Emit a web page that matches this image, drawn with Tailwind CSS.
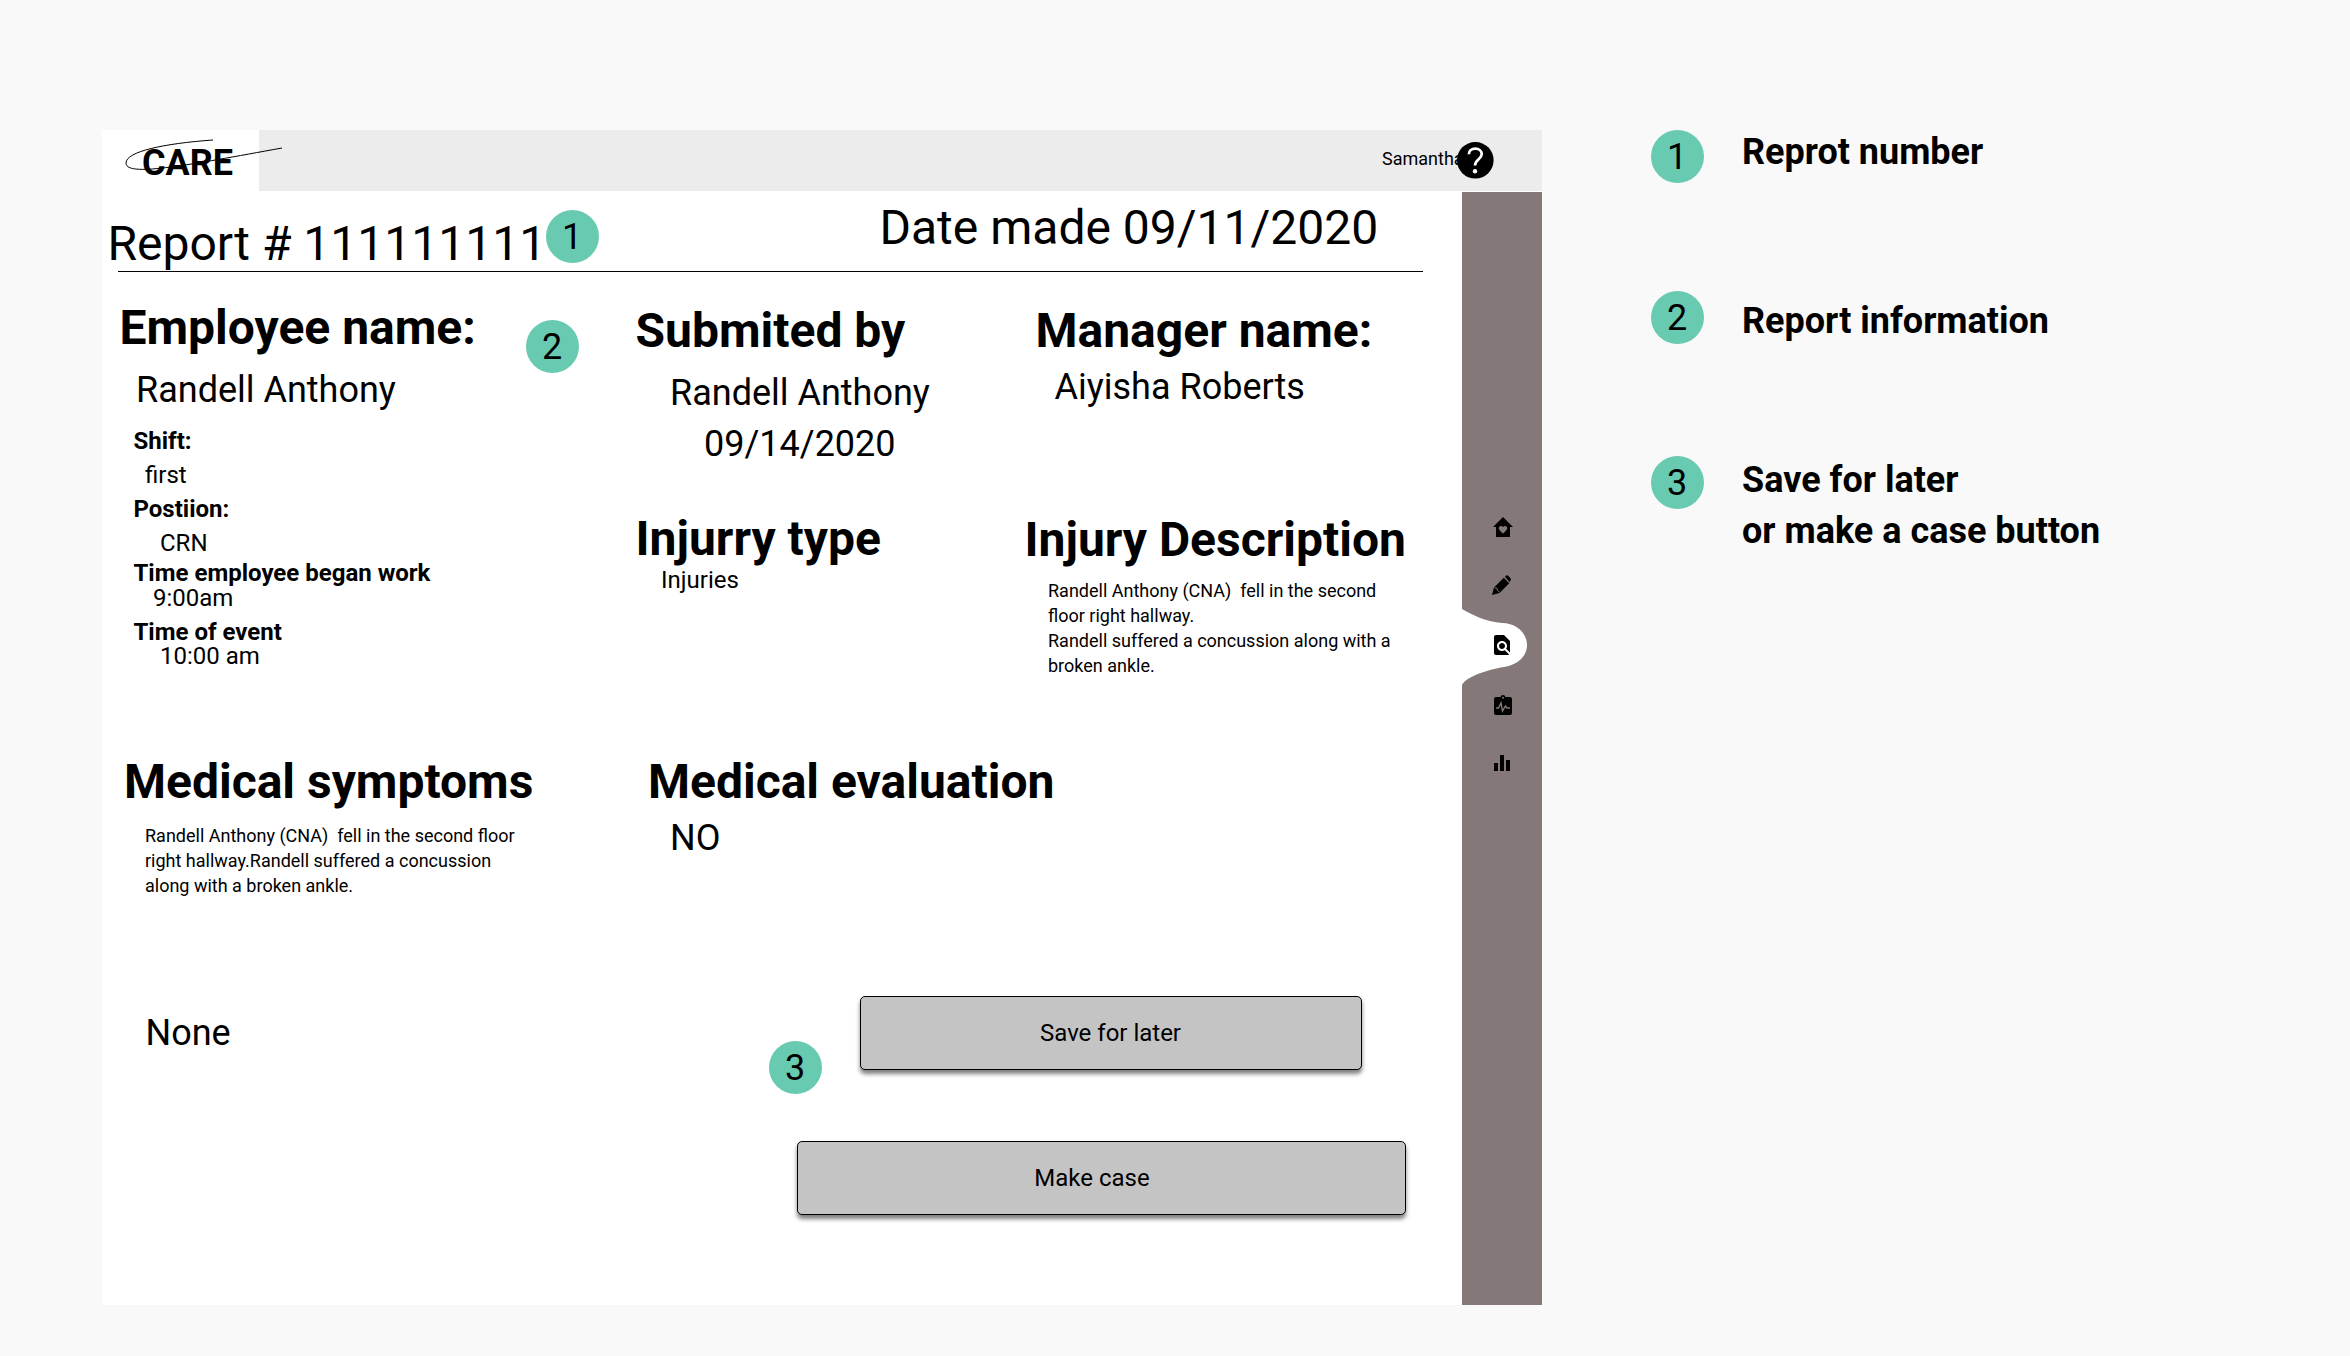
<!DOCTYPE html>
<html lang="en">
<head>
<meta charset="utf-8">
<title>Report details</title>
<script src="https://cdn.jsdelivr.net/npm/@tailwindcss/browser@4"></script>
</head>
<body class="bg-[#f9f9f9] font-[Roboto,sans-serif] text-black w-[2350px] h-[1356px] overflow-hidden">
<div class="flex items-start pt-[130px] pl-[102px]">
  <main class="relative w-[1440px] h-[1175px] bg-white shrink-0">
    <header class="flex h-[61px]">
      <div class="relative w-[157px] h-full">
        <p class="pl-10 pt-3 text-[36px] leading-[42px] font-bold">CARE</p>
        <svg class="absolute left-0 top-0 overflow-visible" width="157" height="61" viewBox="0 0 157 61" fill="none" stroke="#000" stroke-width="1"><path d="M111 10C62 13.500 24 21.500 24 33C24 47 81 36 180 18"/></svg>
      </div>
      <div class="flex-1 bg-[#ececec] flex items-start pl-[1123px]">
        <span class="mt-[18px] text-[18px] leading-[21px]">Samantha</span>
      </div>
      <svg class="absolute left-[1355px] top-3" width="37" height="37" viewBox="0 0 37 37"><circle cx="18.300" cy="18.300" r="18.300"/><path d="M11.800 12.300C12 8.600 14.800 6.600 18.300 6.600C22 6.600 24.700 8.900 24.700 12.300C24.700 17 18 17.600 18 23.500" fill="none" stroke="#fff" stroke-width="2.700"/><circle cx="18" cy="29.300" r="2.200" fill="#fff"/></svg>
    </header>
    <div class="flex pt-px">
      <div class="w-[1360px]">
        <div class="flex h-[79px] pl-[5.5px] text-[48px] leading-[57px]">
          <h1 class="w-[772px] pt-[23px]">Report # 111111111</h1>
          <p class="pt-[7px]">Date made 09/11/2020</p>
        </div>
        <div class="ml-4 w-[1305px] h-px bg-black"></div>
        <section class="grid grid-cols-[533.5px_388.5px_1fr] h-[481px]">
          <div class="pt-[27px] text-[24px] leading-[28px]">
            <h2 class="ml-[17.5px] text-[48px] leading-[57px] font-bold">Employee name:</h2>
            <p class="mt-[13px] ml-[34px] text-[36px] leading-[42px]">Randell Anthony</p>
            <h3 class="mt-4 ml-[31.5px] font-bold">Shift:</h3>
            <p class="mt-1.5 ml-[43px]">first</p>
            <h3 class="mt-1.5 ml-[31.5px] font-bold">Postiion:</h3>
            <p class="mt-1.5 ml-[58px]">CRN</p>
            <h3 class="mt-0.5 ml-[31.5px] font-bold">Time employee began work</h3>
            <p class="-mt-[3px] ml-[51px]">9:00am</p>
            <h3 class="mt-1.5 ml-[31.5px] font-bold">Time of event</h3>
            <p class="-mt-1 ml-[58px]">10:00 am</p>
          </div>
          <div class="pt-[30px]">
            <h2 class="text-[48px] leading-[57px] font-bold">Submited by</h2>
            <p class="mt-[13px] ml-[34.5px] text-[36px] leading-[42px]">Randell Anthony</p>
            <p class="mt-[9px] ml-[68.5px] text-[36px] leading-[42px]">09/14/2020</p>
            <h2 class="mt-[45px] text-[48px] leading-[57px] font-bold">Injurry type</h2>
            <p class="-mt-px ml-[25.5px] text-[24px] leading-[28px]">Injuries</p>
          </div>
          <div class="pt-[30px]">
            <h2 class="ml-[11.5px] text-[48px] leading-[57px] font-bold">Manager name:</h2>
            <p class="mt-[7px] ml-[30.5px] text-[36px] leading-[42px]">Aiyisha Roberts</p>
            <h2 class="mt-[103px] ml-[0.5px] text-[48px] leading-[57px] font-bold whitespace-nowrap">Injury Description</h2>
            <p class="mt-2.5 ml-6 text-[18px] leading-[25px] whitespace-nowrap">Randell Anthony (CNA)&nbsp; fell in the second<br>floor right hallway.<br>Randell suffered a concussion along with a<br>broken ankle.</p>
          </div>
        </section>
        <section class="grid grid-cols-[546px_1fr]">
          <div>
            <h2 class="ml-[22px] text-[48px] leading-[57px] font-bold">Medical symptoms</h2>
            <p class="mt-[13px] ml-[43px] text-[18px] leading-[25px]">Randell Anthony (CNA)&nbsp; fell in the second floor<br>right hallway.Randell suffered a concussion<br>along with a broken ankle.</p>
            <p class="mt-[114px] ml-[43.5px] text-[36px] leading-[42px]">None</p>
          </div>
          <div>
            <h2 class="text-[48px] leading-[57px] font-bold">Medical evaluation</h2>
            <p class="mt-[7px] ml-[22px] text-[36px] leading-[42px]">NO</p>
            <button class="mt-[137px] ml-[212px] flex w-[502px] h-[74px] justify-center pt-[22px] pr-px rounded-[5px] border border-black bg-[#c4c4c4] text-[24px] leading-[28px] shadow-[0_4px_4px_rgba(0,0,0,0.5)]">Save for later</button>
            <button class="mt-[71px] ml-[149px] flex w-[609px] h-[74px] justify-center pt-[22px] pr-[19px] rounded-[5px] border border-black bg-[#c4c4c4] text-[24px] leading-[28px] shadow-[0_4px_4px_rgba(0,0,0,0.5)]">Make case</button>
          </div>
        </section>
      </div>
      <nav class="w-20 h-[1113px] bg-[#847978]">
        <svg width="80" height="1113" viewBox="0 0 80 1113">
          <path fill="#fff" d="M0 417C10 423 25 430 40 431C54 431 65 441 65 453C65 465 55 473 42 475C25 478 5 484 0 493Z"/>
          <g transform="translate(29 323)"><path fill-rule="evenodd" d="M12 2L2 12h3v10h14V12h3L12 2zM12 18.500l-.7-.6C9 15.800 7.800 14.700 7.800 13.300c0-1.300 1-2.200 2.200-2.200.8 0 1.500.4 2 1 .5-.6 1.200-1 2-1 1.200 0 2.200.9 2.200 2.200 0 1.400-1.200 2.500-3.500 4.600z"/></g>
          <g transform="translate(30 384)"><path fill-rule="evenodd" d="M0 19L2 11.500L12 1.500L17.500 7L7.500 17ZM13 .8L14.200-.4Q15.200-1 16.200-.2L18.700 2.400Q19.300 3.400 18.500 4.400L17.500 6Z"/><path stroke="#847978" stroke-width="1" d="M11.700 1.200L17.700 7.200M2.500 11.700L5 12.500L5.500 14.500L7.500 16" fill="none"/></g>
          <g transform="translate(28 441)"><path d="M20 19.590V8l-6-6H6c-1.100 0-1.990.9-1.990 2L4 20c0 1.100.890 2 1.990 2H18c.450 0 .850-.150 1.190-.4l-4.430-4.430c-.8.520-1.740.830-2.760.830-2.760 0-5-2.240-5-5s2.240-5 5-5 5 2.240 5 5c0 1.020-.310 1.960-.830 2.750L20 19.590zM9 13c0 1.660 1.340 3 3 3s3-1.340 3-3-1.340-3-3-3-3 1.340-3 3z"/></g>
          <g transform="translate(32 503)"><path d="M2 2H6.500A2.600 2.600 0 0 1 11.500 2H16Q18 2 18 4V18Q18 20 16 20H2Q0 20 0 18V4Q0 2 2 2Z"/><circle cx="9" cy="2.800" r="1" fill="#847978"/><path fill="none" stroke="#847978" stroke-width="1.400" d="M2 13H4.500L7 8L8.500 16L11.500 11L13 13H16"/></g>
          <path d="M32 571h4v8h-4zM38 563h4v16h-4zM44 568h4v11h-4z"/>
        </svg>
      </nav>
    </div>
    <span class="absolute left-[444px] top-20 size-[53px] rounded-full bg-[#68cbb1] pt-1.5 pr-px text-center text-[36px] leading-[42px]">1</span>
    <span class="absolute left-[424px] top-[190px] size-[53px] rounded-full bg-[#68cbb1] pt-1.5 pr-px text-center text-[36px] leading-[42px]">2</span>
    <span class="absolute left-[667px] top-[911px] size-[53px] rounded-full bg-[#68cbb1] pt-1.5 pr-px text-center text-[36px] leading-[42px]">3</span>
  </main>
  <aside class="ml-[109px] text-[36px]">
    <div class="flex h-[161px]">
      <span class="size-[53px] rounded-full bg-[#68cbb1] pt-1.5 pr-px text-center leading-[42px]">1</span>
      <p class="ml-[38px] pt-px font-bold leading-[42px]">Reprot number</p>
    </div>
    <div class="flex h-[165px]">
      <span class="size-[53px] rounded-full bg-[#68cbb1] pt-1.5 pr-px text-center leading-[42px]">2</span>
      <p class="ml-[38px] pt-[9px] font-bold leading-[42px]">Report information</p>
    </div>
    <div class="flex">
      <span class="size-[53px] rounded-full bg-[#68cbb1] pt-1.5 pr-px text-center leading-[42px]">3</span>
      <p class="ml-[38px] -mt-px font-bold leading-[51px]">Save for later<br>or make a case button</p>
    </div>
  </aside>
</div>
</body>
</html>
